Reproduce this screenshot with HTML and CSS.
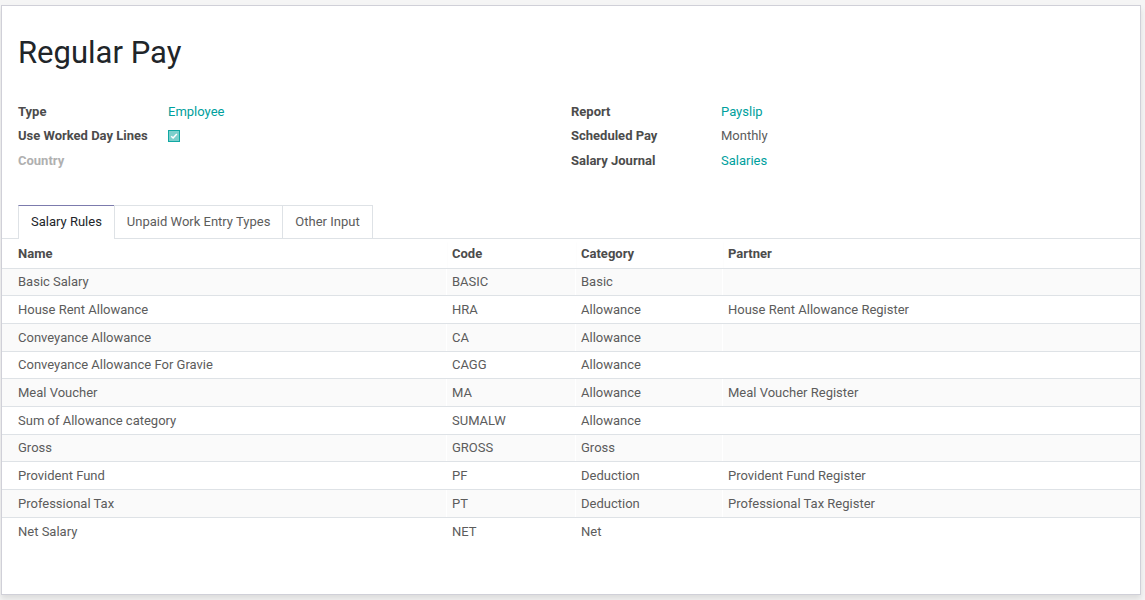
FILE: index.html
```html
<!DOCTYPE html>
<html>
<head>
<meta charset="utf-8">
<link rel="stylesheet" href="styles.css">
</head>
<body>
<div class="sheet">
  <h1 class="title">Regular Pay</h1>
  <div class="groups">
    <div class="group">
      <div class="field"><span class="label">Type</span><span class="value link">Employee</span></div>
      <div class="field"><span class="label">Use Worked Day Lines</span><span class="value"><span class="check"><svg width="8" height="8" viewBox="0 0 8 8"><path d="M1.2 4.3 L3.1 6 L6.8 2" fill="none" stroke="#fff" stroke-width="1.5"/></svg></span></span></div>
      <div class="field"><span class="label muted">Country</span><span class="value"></span></div>
    </div>
    <div class="group">
      <div class="field"><span class="label">Report</span><span class="value link">Payslip</span></div>
      <div class="field"><span class="label">Scheduled Pay</span><span class="value">Monthly</span></div>
      <div class="field"><span class="label">Salary Journal</span><span class="value link">Salaries</span></div>
    </div>
  </div>
  <div class="tabs">
    <div class="tab active">Salary Rules</div>
    <div class="tab">Unpaid Work Entry Types</div>
    <div class="tab">Other Input</div>
  </div>
  <table class="list">
    <thead>
      <tr><th class="c-name">Name</th><th class="c-code">Code</th><th class="c-cat">Category</th><th class="c-partner">Partner</th></tr>
    </thead>
    <tbody>
      <tr><td>Basic Salary</td><td>BASIC</td><td>Basic</td><td></td></tr>
      <tr><td>House Rent Allowance</td><td>HRA</td><td>Allowance</td><td>House Rent Allowance Register</td></tr>
      <tr><td>Conveyance Allowance</td><td>CA</td><td>Allowance</td><td></td></tr>
      <tr><td>Conveyance Allowance For Gravie</td><td>CAGG</td><td>Allowance</td><td></td></tr>
      <tr><td>Meal Voucher</td><td>MA</td><td>Allowance</td><td>Meal Voucher Register</td></tr>
      <tr><td>Sum of Allowance category</td><td>SUMALW</td><td>Allowance</td><td></td></tr>
      <tr><td>Gross</td><td>GROSS</td><td>Gross</td><td></td></tr>
      <tr><td>Provident Fund</td><td>PF</td><td>Deduction</td><td>Provident Fund Register</td></tr>
      <tr><td>Professional Tax</td><td>PT</td><td>Deduction</td><td>Professional Tax Register</td></tr>
      <tr class="last"><td>Net Salary</td><td>NET</td><td>Net</td><td></td></tr>
    </tbody>
  </table>
</div>
</body>
</html>
```

FILE: styles.css
```css
html, body {
  margin: 0;
  padding: 0;
}
body {
  background: #f5f5f5;
  font-family: Roboto, "Liberation Sans", sans-serif;
  font-size: 13px;
  color: #4c4c4c;
  width: 1145px;
  height: 600px;
  overflow: hidden;
}
.sheet {
  box-sizing: border-box;
  margin: 5px 0 0 1px;
  width: 1140px;
  height: 590px;
  background: #fff;
  border: 1px solid #d0d0d8;
  box-shadow: 0 4px 6px rgba(0,0,0,0.1);
  padding: 0 16px;
}
.title {
  margin: 0;
  padding-top: 29px;
  font-size: 31px;
  font-weight: 400;
  line-height: 36px;
  color: #212529;
}
.groups {
  display: flex;
  margin-top: 28px;
}
.group {
  width: 553px;
}
.field {
  display: flex;
  height: 24.5px;
  align-items: center;
}
.label {
  width: 150px;
  font-weight: 700;
  color: #4c4c4c;
}
.label.muted {
  color: #b0b0b0;
}
.value {
  color: #5c5c5c;
}
.link {
  color: #00a09d;
}
.check {
  display: flex;
  align-items: center;
  justify-content: center;
  box-sizing: border-box;
  width: 12px;
  height: 12px;
  border: 1px solid #11a8a3;
  background: #7ccfcc;
  margin-top: 1px;
}
.tabs {
  display: flex;
  margin: 32px -16px 0;
  padding-left: 16px;
  border-bottom: 1px solid #dee2e6;
}
.tab {
  box-sizing: border-box;
  height: 33px;
  line-height: 32px;
  padding: 0 12px;
  border: 1px solid #dee2e6;
  border-bottom: none;
  margin-right: -1px;
  margin-bottom: -1px;
  color: #5c5c5c;
}
.tab.active {
  background: #fff;
  color: #212529;
  border-top: 1px solid #7c7bad;
  height: 34px;
}
.list {
  margin: 0 -16px;
  width: calc(100% + 32px);
  border-collapse: collapse;
}
.list th, .list td {
  text-align: left;
  padding: 0 0 0 5px;
  border-left: 1px solid #fff;
  white-space: nowrap;
}
.list th:first-child, .list td:first-child {
  padding-left: 16px;
  border-left: none;
}
.list th {
  height: 29px;
  font-weight: 700;
  color: #4c4c4c;
  border-bottom: 1px solid #dee2e6;
  box-shadow: 0 2px 3px -1px rgba(0,0,0,0.06);
}
.list td {
  height: 26.7px;
  border-bottom: 1px solid #dee2e6;
  color: #5c5c5c;
}
.list tbody tr:nth-child(odd) td {
  background: #fafafa;
}
.list tbody tr.last td {
  border-bottom: none;
}
.c-name { width: 428px; }
.c-code { width: 123px; }
.c-cat { width: 141px; }
```
